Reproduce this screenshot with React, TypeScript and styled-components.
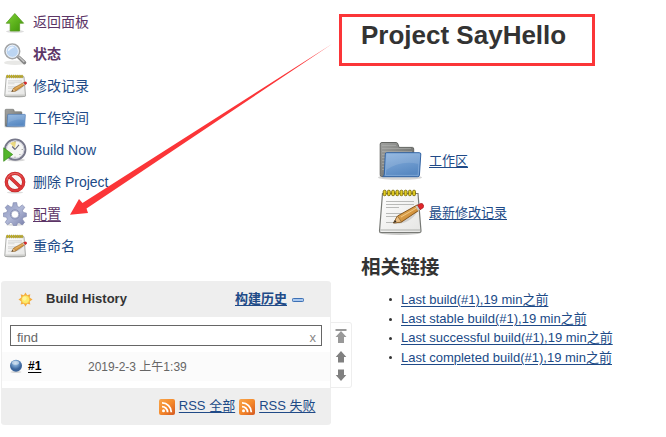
import React from "react";
import styled, { createGlobalStyle, css } from "styled-components";

const GlobalStyle = createGlobalStyle`
  * { box-sizing: border-box; }
  body {
    margin: 0;
    background: #fff;
    color: #333;
    font-family: "Liberation Sans", "Noto Sans CJK SC", sans-serif;
    font-size: 13px;
  }
`;

const Page = styled.div`
  position: relative;
  display: flex;
  width: 666px;
  height: 437px;
  overflow: hidden;
`;

const Sidebar = styled.aside`
  width: 331px;
  flex: none;
  padding: 6px 0 0 1px;
`;

const Tasks = styled.nav`
  display: flex;
  flex-direction: column;
  padding-left: 2px;
`;

const Task = styled.a<{ $visited?: boolean; $active?: boolean; $underlined?: boolean }>`
  display: flex;
  align-items: center;
  gap: 6px;
  height: 32px;
  font-size: 14px;
  line-height: 20px;
  white-space: pre;
  color: ${(p) => (p.$visited ? "#5c3566" : "#204a87")};
  font-weight: ${(p) => (p.$active ? 700 : 400)};
  svg { flex: none; }
  span {
    text-decoration: ${(p) => (p.$underlined ? "underline" : "none")};
    text-decoration-thickness: 1px;
    text-underline-offset: 2px;
  }
`;

const Link = styled.a<{ $bold?: boolean; $size?: number; $dark?: boolean }>`
  color: ${(p) => (p.$dark ? "#000" : "#204a87")};
  font-size: ${(p) => p.$size ?? 13}px;
  font-weight: ${(p) => (p.$bold ? 700 : 400)};
  line-height: 18px;
  white-space: pre;
  text-decoration: underline;
  text-decoration-thickness: 1px;
  text-underline-offset: 2px;
`;

const History = styled.section`
  margin-top: 19px;
  width: 330px;
  height: 144px;
  border: 1px solid #eee;
  border-width: 0 1px;
  border-radius: 4px;
`;

const band = css`
  display: flex;
  align-items: center;
  background: #eee;
`;

const HistoryHeader = styled.header`
  ${band}
  height: 36px;
  margin: 0 -1px;
  padding: 0 27px 0 17px;
  border-radius: 4px 4px 0 0;
`;

const HistoryTitle = styled.h3`
  margin: 0 auto 0 13px;
  font-size: 13px;
  line-height: 18px;
`;

const CollapseToggle = styled.span`
  display: flex;
  margin-left: 5px;
  padding-top: 2px;
`;

const HistoryBody = styled.div`
  height: 71px;
  padding-top: 8px;
`;

const Search = styled.div`
  display: flex;
  justify-content: space-between;
  margin: 0 8px;
  width: 312px;
  height: 21px;
  padding: 3px 5px 0 6px;
  border: 1px solid #666;
  color: #666;
  line-height: 18px;
`;

const Clear = styled.span`
  color: #888;
`;

const BuildRow = styled.div`
  display: flex;
  align-items: center;
  height: 29px;
  margin-top: 6px;
  padding: 0 0 2px 7px;
  background: #fbfbfb;
`;

const BuildNumber = styled.div`
  width: 60px;
  margin-left: 5px;
`;

const BuildDate = styled.time`
  color: #666;
  font-size: 12px;
`;

const HistoryFooter = styled.footer`
  ${band}
  height: 37px;
  margin: 0 -1px;
  justify-content: flex-end;
  gap: 4px;
  padding: 0 15.5px 1px 0;
  border-radius: 0 0 4px 4px;
  svg { margin-top: 2px; }
`;

const Pager = styled.div`
  display: flex;
  flex-direction: column;
  align-items: center;
  justify-content: space-between;
  flex: none;
  width: 21px;
  height: 66px;
  margin-top: 322px;
  padding: 6px 0;
  border: 1px solid #eee;
  border-left: 0;
  border-radius: 0 3px 3px 0;
`;

const Main = styled.main`
  width: 300px;
  margin-left: 9px;
  padding-top: 18px;
`;

const Title = styled.h1`
  margin: 0 0 83px;
  font-size: 26px;
  line-height: 35px;
  white-space: nowrap;
`;

const Summary = styled.div`
  display: flex;
  align-items: center;
  gap: 5px;
  height: 48px;
  margin: 0 0 4px 15px;
  a { padding-top: 2px; }
`;

const SectionTitle = styled.h2`
  margin: 17px 0 0;
  font-size: 19.6px;
  line-height: 28px;
`;

const Permalinks = styled.ul`
  list-style: none;
  margin: 9px 0 0;
  padding: 0 0 0 28px;
`;

const Permalink = styled.li`
  display: flex;
  align-items: center;
  height: 19.4px;
  &::before {
    content: "";
    width: 3px;
    height: 3px;
    margin-right: 9px;
    border-radius: 50%;
    background: #333;
  }
`;

const TitleMark = styled.div`
  position: absolute;
  left: 339px;
  top: 14px;
  width: 256px;
  height: 52px;
  border: 3px solid #fb3538;
`;

const Pointer = styled.svg`
  position: absolute;
  inset: 0;
  pointer-events: none;
`;

type Size = { size?: number };

const UpIcon = () => (
  <svg width="24" height="24" viewBox="0 0 24 24">
    <defs><linearGradient id="up" x2="1" y2="1"><stop stopColor="#7fd233" /><stop offset="1" stopColor="#3d9407" /></linearGradient></defs>
    <ellipse cx="12" cy="21.5" rx="9" ry="1.5" fill="#ddd" />
    <path d="M11.8 3.5 20.6 13.2H16.6V21H7.2V13.2H3.2Z" fill="url(#up)" stroke="#55991f" strokeWidth=".8" />
  </svg>
);

const SearchIcon = () => (
  <svg width="24" height="24" viewBox="0 0 24 24">
    <ellipse cx="12" cy="20.7" rx="11" ry="2.3" fill="#e8e8e6" />
    <path d="m15.5 15 6 5.6" stroke="#858585" strokeWidth="3.5" strokeLinecap="round" />
    <path d="m15.5 14.5 5.8 5.5" stroke="#c7c7c7" strokeWidth="1.3" />
    <circle cx="9.3" cy="9.3" r="7.3" fill="#bcd5f2" stroke="#a4a6a8" strokeWidth="1.7" />
    <circle cx="9.3" cy="9.3" r="6.1" fill="none" stroke="#f4f7fb" strokeWidth=".9" />
    <path d="M4.8 9.5A4.5 4.5 0 0 1 11.5 5.2C8 6.3 7 8 4.8 9.5Z" fill="#edf5ff" />
  </svg>
);

const NotepadIcon = ({ size = 24 }: Size) => (
  <svg width={size} height={size} viewBox="0 0 48 48">
    <defs>
      <linearGradient id="paper" y2="1"><stop stopColor="#fff" /><stop offset="1" stopColor="#e5e5e3" /></linearGradient>
      <linearGradient id="pencil" x2="1" y2="1"><stop stopColor="#f6c670" /><stop offset="1" stopColor="#b9701c" /></linearGradient>
    </defs>
    <ellipse cx="24" cy="44.5" rx="21" ry="2.5" fill="#c8c8c6" />
    <path d="M6.5 5.5H42L45 43.3Q45 44.5 43.5 44.5H5Q3.5 44.5 3.5 43Z" fill="url(#paper)" stroke="#777975" strokeWidth="1.2" />
    <path d="M4.3 42H44" stroke="#adafab" strokeWidth="1" />
    <path d="M10 13.5H38M10 16.5H38M10 19.5H23M10 25.5H38M10 28.5H28M10 34.5H24" stroke="#b9bab8" strokeWidth="1" />
    {[8.5, 12.7, 16.9, 21.1, 25.3, 29.5, 33.7, 37.9].map((x) => (
      <rect key={x} x={x - 1.3} y="2.2" width="2.9" height="5.5" rx="1.3" fill="#e1cb20" stroke="#796b09" strokeWidth=".9" />
    ))}
    <path d="M20 34Q31 33 42 23Q34 36 19 36Z" fill="#747474" opacity=".25" />
    <path d="m17.5 35 4-7 20-11.2 2.8 4.6L25.5 34Z" fill="url(#pencil)" stroke="#7b4b12" strokeWidth=".9" />
    <path d="m17.5 35 4-7 4 6Z" fill="#e9bd83" stroke="#75511f" strokeWidth=".5" />
    <path d="m17.2 35 2-3 1.3 2.1Z" fill="#332d25" />
    <path d="m39.5 18.5 2.7 4.5 2.1-1.3-2.7-4.5Z" fill="#c8c8c5" />
    <path d="m41.5 17.2 2.7-1.6q2-.9 3.2 1.2t-.7 3.4l-2.5 1.5Z" fill="#df262a" stroke="#8e181b" strokeWidth=".5" />
    <path d="m25 29 15.5-9" stroke="#ffe4ab" strokeWidth=".9" opacity=".7" />
  </svg>
);

const FolderIcon = ({ size = 24 }: Size) => (
  <svg width={size} height={size} viewBox="0 0 48 48">
    <defs>
      <linearGradient id="back" y2="1"><stop stopColor="#a0a19f" /><stop offset="1" stopColor="#5d5f5c" /></linearGradient>
      <linearGradient id="front" x2=".4" y2="1"><stop stopColor="#8bb2df" /><stop offset="1" stopColor="#5889c2" /></linearGradient>
    </defs>
    <ellipse cx="24" cy="41.5" rx="22" ry="2.3" fill="#d4d4d4" />
    <path d="M5.5 40.5Q4 40.5 4.2 38.5V8Q4.3 6.5 6 6.5H20.2Q21.5 6.5 22 8.2L23 11.4H36.5Q37.7 11.4 37.7 13V39Z" fill="url(#back)" stroke="#646663" />
    <path d="M6 9.5H20M6 12.5H35M6 15.5H36M6 18.5H10M6 21.5H10M6 24.5H10M6 27.5H10M6 30.5H9M6 33.5H9" stroke="#b5b6b4" strokeWidth=".5" />
    <path d="M10.5 16.7H43.2Q44.9 16.7 44.8 18L43.4 39.5Q43.2 40.7 41.7 40.7H6.8Q8.1 40.1 8.3 38L9.3 18Q9.4 16.7 10.5 16.7Z" fill="url(#front)" stroke="#3465a4" />
    <path d="M10.7 17.9H43.5L42.2 39.4H9.4Z" fill="none" stroke="#92b7e0" strokeWidth=".6" />
    <path d="M11 18.2H43L42.3 28Q25 24 10.3 34Z" fill="#fff" opacity=".12" />
  </svg>
);

const ClockIcon = () => (
  <svg width="24" height="24" viewBox="0 0 24 24">
    <ellipse cx="13" cy="22" rx="9" ry="1.4" fill="#d8d8d8" />
    <circle cx="12.2" cy="11.6" r="10.2" fill="#f5f5f3" stroke="#77788a" strokeWidth="2" />
    <circle cx="12.2" cy="11.6" r="8.8" fill="none" stroke="#c9cad6" strokeWidth="1" />
    <path d="M12 10 7 5.2Q9.5 3.2 13 3.4Z" fill="#ead880" />
    <path d="m12 11.5 4-4.6M12 11.5l-2.8-3" fill="none" stroke="#666675" strokeWidth="1.1" />
    <path d="M12 3.2v1M19.7 11.5h-1M12 19.7v-1M17.4 17l-.8-.8" stroke="#888" />
    <path d="M.7 9.8 9.7 16.5.7 23.3Z" fill="#53b52b" stroke="#388d18" strokeWidth=".7" />
  </svg>
);

const ForbiddenIcon = () => (
  <svg width="24" height="24" viewBox="0 0 24 24">
    <ellipse cx="12" cy="22.5" rx="8" ry="1.1" fill="#ddd" />
    <circle cx="12" cy="12" r="8.7" fill="#f8f8f8" stroke="#bd2425" strokeWidth="3.3" />
    <circle cx="12" cy="12" r="8.7" fill="none" stroke="#dd393a" strokeWidth="2.3" />
    <path d="m6.2 6.5 11.6 11" stroke="#bd2425" strokeWidth="3.4" />
    <path d="m5.9 6.2 12.2 11.6" stroke="#dd393a" strokeWidth="2.4" />
    <path d="M4 10A8.2 8.2 0 0 1 18.5 6.5" fill="none" stroke="#ef8785" strokeWidth=".6" />
  </svg>
);

const GearIcon = () => (
  <svg width="24" height="24" viewBox="0 0 24 24">
    <defs><linearGradient id="gear" x2="1" y2="1"><stop stopColor="#8e97bf" /><stop offset=".5" stopColor="#b0b8d6" /><stop offset="1" stopColor="#777da8" /></linearGradient></defs>
    <ellipse cx="12" cy="22.7" rx="9" ry="1" fill="#ddd" />
    <path fill="url(#gear)" stroke="#7b83a9" strokeWidth=".6" fillRule="evenodd" d="m10.2.7 3.5-.1.7 3.9 1.8.8 3.1-2.4 2.5 2.4-2.3 3.2.8 1.9 3.1.7v3.5l-3.2.8-.8 1.8 2.2 3.2-2.4 2.5-3.2-2.1-1.7.7-.6 2h-3.4l-.8-2.2-1.8-.8-3.1 2.2-2.4-2.4 2.1-3.1-.7-1.9-3.3-.7v-3.5l3.3-.7.8-1.8-2.2-3.2 2.5-2.4L8 5.2l1.6-.7ZM12 8.6a3.8 3.8 0 1 0 0 7.6 3.8 3.8 0 0 0 0-7.6Z" />
    <circle cx="12" cy="12.4" r="4.7" fill="none" stroke="#858db3" strokeWidth=".8" />
  </svg>
);

const SunIcon = () => (
  <svg width="15" height="15" viewBox="0 0 16 16">
    <path d="m8 .5 1.8 3 3.4-1-.8 3.3 3.1 2.2-3.1 2.1.8 3.3-3.4-.9L8 15.6l-1.8-3.1-3.4.9.8-3.3L.5 8l3.1-2.2-.8-3.3 3.4 1Z" fill="#f5ab3e" />
    <circle cx="8" cy="8" r="4.5" fill="#fdea68" stroke="#f3bb45" />
    <circle cx="7" cy="7" r="2.2" fill="#fff49a" />
  </svg>
);

const MinusIcon = () => (
  <svg width="12" height="5" viewBox="0 0 12 5"><rect x=".5" y=".5" width="11" height="3" rx=".8" fill="#a9c8ef" stroke="#3d70b4" /></svg>
);

const BallIcon = () => (
  <svg width="14" height="14" viewBox="0 0 14 14">
    <defs><radialGradient id="ball" cx=".45" cy=".3"><stop stopColor="#b5cfe9" /><stop offset=".5" stopColor="#6f9ac9" /><stop offset="1" stopColor="#3a649b" /></radialGradient></defs>
    <ellipse cx="7" cy="13" rx="5.5" ry=".8" fill="#ccc" />
    <circle cx="7" cy="6.7" r="6" fill="url(#ball)" />
    <ellipse cx="6.5" cy="3.8" rx="3.6" ry="2" fill="#eef5fb" opacity=".5" />
  </svg>
);

const RssIcon = () => (
  <svg width="16" height="16" viewBox="0 0 16 16">
    <defs><linearGradient id="rss" x2="1" y2="1"><stop stopColor="#f7a54d" /><stop offset=".5" stopColor="#f58a2c" /><stop offset="1" stopColor="#d45820" /></linearGradient></defs>
    <rect width="16" height="16" rx="2" fill="url(#rss)" />
    <circle cx="4.5" cy="11.8" r="1.5" fill="#fff" />
    <path d="M3 7.6a5.6 5.6 0 0 1 5.6 5.6M3 3.9a9.3 9.3 0 0 1 9.3 9.3" fill="none" stroke="#fff" strokeWidth="1.8" />
  </svg>
);

const ArrowIcon = ({ kind }: { kind: "top" | "up" | "down" }) => (
  <svg width="12" height={kind === "top" ? 15 : 12} viewBox={kind === "top" ? "0 0 12 15" : "0 0 12 12"}>
    {kind === "top" && <path d="M.5 0h11v2H.5ZM6 2l5.5 6H9v6H3V8H.5Z" fill="#999" />}
    {kind === "up" && <path d="m6 0 5.3 6H9v5.5H3V6H.7Z" fill="#808080" />}
    {kind === "down" && <path d="M6 12 .7 6H3V.5h6V6h2.3Z" fill="#808080" />}
  </svg>
);

const tasks = [
  { label: "返回面板", icon: <UpIcon />, visited: true },
  { label: "状态", icon: <SearchIcon />, visited: true, active: true },
  { label: "修改记录", icon: <NotepadIcon /> },
  { label: "工作空间", icon: <FolderIcon /> },
  { label: "Build Now", icon: <ClockIcon /> },
  { label: "删除 Project", icon: <ForbiddenIcon /> },
  { label: "配置", icon: <GearIcon />, visited: true, underlined: true },
  { label: "重命名", icon: <NotepadIcon /> },
];

const permalinks = ["build", "stable build", "successful build", "completed build"];

export default function App() {
  return (
    <Page>
      <GlobalStyle />
      <Sidebar>
        <Tasks>
          {tasks.map((t) => (
            <Task key={t.label} $visited={t.visited} $active={t.active} $underlined={t.underlined}>
              {t.icon}<span>{t.label}</span>
            </Task>
          ))}
        </Tasks>
        <History>
          <HistoryHeader>
            <SunIcon />
            <HistoryTitle>Build History</HistoryTitle>
            <Link $bold>构建历史</Link>
            <CollapseToggle><MinusIcon /></CollapseToggle>
          </HistoryHeader>
          <HistoryBody>
            <Search><span>find</span><Clear>x</Clear></Search>
            <BuildRow>
              <BallIcon />
              <BuildNumber><Link $bold $dark $size={12}>#1</Link></BuildNumber>
              <BuildDate>2019-2-3 上午1:39</BuildDate>
            </BuildRow>
          </HistoryBody>
          <HistoryFooter>
            <RssIcon /><Link>RSS 全部</Link>
            <RssIcon /><Link>RSS 失败</Link>
          </HistoryFooter>
        </History>
      </Sidebar>
      <Pager><ArrowIcon kind="top" /><ArrowIcon kind="up" /><ArrowIcon kind="down" /></Pager>
      <Main>
        <Title>Project SayHello</Title>
        <Summary><FolderIcon size={48} /><Link>工作区</Link></Summary>
        <Summary><NotepadIcon size={48} /><Link>最新修改记录</Link></Summary>
        <SectionTitle>相关链接</SectionTitle>
        <Permalinks>
          {permalinks.map((p) => (
            <Permalink key={p}><Link>{`Last ${p}(#1),19 min之前`}</Link></Permalink>
          ))}
        </Permalinks>
      </Main>
      <TitleMark />
      <Pointer width="666" height="437" viewBox="0 0 666 437">
        <path d="M332 44 82.5 203 79 199 70 214.7 88 213 86.5 208.5Z" fill="#fb3538" />
      </Pointer>
    </Page>
  );
}
